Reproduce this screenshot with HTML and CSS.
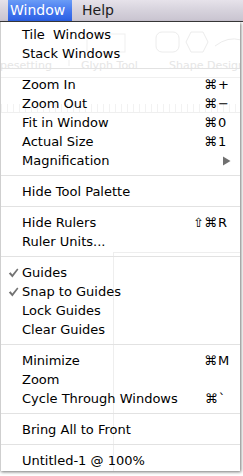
FILE: index.html
```html
<!DOCTYPE html>
<html>
<head>
<meta charset="utf-8">
<link rel="stylesheet" href="styles.css">
</head>
<body>
<div class="menubar">
  <div class="mb-item active">Window</div>
  <div class="mb-item help">Help</div>
</div>
<div class="menu">
  <div class="ghost">
    <span class="g-text g1">pesetting</span>
    <span class="g-text g2">Glyph Tool</span>
    <span class="g-text g3">Shape Designer</span>
    <svg class="g-icons" width="240" height="40" viewBox="0 0 240 40">
      <rect x="155" y="6" width="23" height="20" rx="6" fill="none" stroke="#ececec" stroke-width="1"/>
      <polygon points="190,6 202,6 207,16 202,26 190,26 185,16" fill="none" stroke="#ececec" stroke-width="1"/>
      <path d="M214 20 Q227 10 240 14" fill="none" stroke="#ececec" stroke-width="1"/>
      <rect x="86" y="8" width="38" height="18" fill="none" stroke="#efefef" stroke-width="1"/>
      <line x1="68" y1="34" x2="68" y2="48" stroke="#ededed"/>
    </svg>
    <div class="g-line g-l1"></div>
    <div class="g-ruler"></div>
    <div class="g-vline"></div>
    <div class="g-hline"></div>
  </div>

  <div class="row"><span class="chk"></span><span class="lbl">Tile&nbsp; Windows</span></div>
  <div class="row"><span class="chk"></span><span class="lbl">Stack Windows</span></div>
  <div class="sep"></div>
  <div class="row"><span class="chk"></span><span class="lbl">Zoom In</span><span class="mods">⌘</span><span class="key">+</span></div>
  <div class="row"><span class="chk"></span><span class="lbl">Zoom Out</span><span class="mods">⌘</span><span class="key">−</span></div>
  <div class="row"><span class="chk"></span><span class="lbl">Fit in Window</span><span class="mods">⌘</span><span class="key">0</span></div>
  <div class="row"><span class="chk"></span><span class="lbl">Actual Size</span><span class="mods">⌘</span><span class="key">1</span></div>
  <div class="row"><span class="chk"></span><span class="lbl">Magnification</span><span class="mods"></span><span class="key arrow"><svg width="9" height="10" viewBox="0 0 9 10"><polygon points="1,0.5 8.5,5 1,9.5" fill="#707070"/></svg></span></div>
  <div class="sep"></div>
  <div class="row"><span class="chk"></span><span class="lbl">Hide Tool Palette</span></div>
  <div class="sep"></div>
  <div class="row"><span class="chk"></span><span class="lbl">Hide Rulers</span><span class="mods">⇧⌘</span><span class="key">R</span></div>
  <div class="row"><span class="chk"></span><span class="lbl">Ruler Units...</span></div>
  <div class="sep"></div>
  <div class="row"><span class="chk"><svg width="11" height="10" viewBox="0 0 11 10"><path d="M0.8 5.6 L2.6 4.2 L4.3 6.4 L9.2 0.6 L10.4 1.6 L4.4 9.4 Z" fill="#737373"/></svg></span><span class="lbl">Guides</span></div>
  <div class="row"><span class="chk"><svg width="11" height="10" viewBox="0 0 11 10"><path d="M0.8 5.6 L2.6 4.2 L4.3 6.4 L9.2 0.6 L10.4 1.6 L4.4 9.4 Z" fill="#737373"/></svg></span><span class="lbl">Snap to Guides</span></div>
  <div class="row"><span class="chk"></span><span class="lbl">Lock Guides</span></div>
  <div class="row"><span class="chk"></span><span class="lbl">Clear Guides</span></div>
  <div class="sep"></div>
  <div class="row"><span class="chk"></span><span class="lbl">Minimize</span><span class="mods">⌘</span><span class="key">M</span></div>
  <div class="row"><span class="chk"></span><span class="lbl">Zoom</span></div>
  <div class="row"><span class="chk"></span><span class="lbl">Cycle Through Windows</span><span class="mods">⌘</span><span class="key">`</span></div>
  <div class="sep"></div>
  <div class="row"><span class="chk"></span><span class="lbl">Bring All to Front</span></div>
  <div class="sep"></div>
  <div class="row"><span class="chk"></span><span class="lbl">Untitled-1 @ 100%</span></div>
</div>
</body>
</html>
```

FILE: styles.css
```css
html, body {
  margin: 0;
  padding: 0;
  background: #ffffff;
}

body {
  font-family: "DejaVu Sans", "Liberation Sans", sans-serif;
  width: 243px;
  height: 476px;
  overflow: hidden;
}

.menubar {
  display: flex;
  height: 21px;
  line-height: 21px;
  font-size: 14px;
  border-bottom: 1px solid #3c3c3c;
  background: linear-gradient(to bottom, #e6e2ea 0%, #d6d2dc 50%, #c9c4d0 100%);
}

.mb-item {
  white-space: nowrap;
}

.mb-item.active {
  margin-left: 8px;
  width: 64px;
  box-sizing: border-box;
  padding-left: 2px;
  color: #ffffff;
  background: linear-gradient(to bottom, #6a9cf6 0%, #4679ef 50%, #2b5fe3 100%);
}

.mb-item.help {
  margin-left: 10px;
  color: #1c1c1c;
}

.menu {
  position: relative;
  width: 240px;
  box-sizing: border-box;
  padding: 3px 0 1px 0;
  background: #ffffff;
  border-left: 1px solid #cfcfcf;
  box-shadow: 1px 1px 3px rgba(0, 0, 0, 0.55);
  font-size: 13px;
  color: #000000;
}

.row {
  position: relative;
  z-index: 1;
  display: grid;
  grid-template-columns: 21px 1fr 40px 14px 9px;
  height: 19px;
  line-height: 19px;
  white-space: nowrap;
}

.chk {
  display: flex;
  align-items: center;
  justify-content: flex-end;
  padding-right: 3px;
}

.mods {
  text-align: right;
}

.key {
  text-align: left;
  padding-left: 1px;
}

.key.arrow {
  display: flex;
  align-items: center;
  padding-left: 5px;
}

.sep {
  position: relative;
  z-index: 1;
  height: 1px;
  margin: 5px 0 6px 0;
  background: #e2e2e2;
}

.ghost {
  position: absolute;
  left: 0;
  top: 0;
  right: 0;
  bottom: 0;
  z-index: 0;
  overflow: hidden;
}

.g-text {
  position: absolute;
  top: 38px;
  font-size: 11px;
  line-height: 12px;
  color: #e6e6e6;
  white-space: nowrap;
}

.g1 { left: -1px; }
.g2 { left: 80px; }
.g3 { left: 168px; }

.g-icons {
  position: absolute;
  left: 0;
  top: 4px;
}

.g-line {
  position: absolute;
  left: 0;
  right: 0;
  height: 1px;
  background: #f0f0f0;
}

.g-l1 { top: 55px; }

.g-ruler {
  position: absolute;
  left: 0;
  right: 0;
  top: 82px;
  height: 8px;
  border-bottom: 1px solid #ececec;
  background: repeating-linear-gradient(to right, #efefef 0, #efefef 1px, transparent 1px, transparent 6px);
  opacity: 0.8;
}

.g-vline {
  position: absolute;
  left: 112px;
  top: 230px;
  bottom: 0;
  width: 1px;
  background: #eeeeee;
}

.g-hline {
  position: absolute;
  left: 112px;
  right: 0;
  top: 230px;
  height: 1px;
  background: #eeeeee;
}
```
